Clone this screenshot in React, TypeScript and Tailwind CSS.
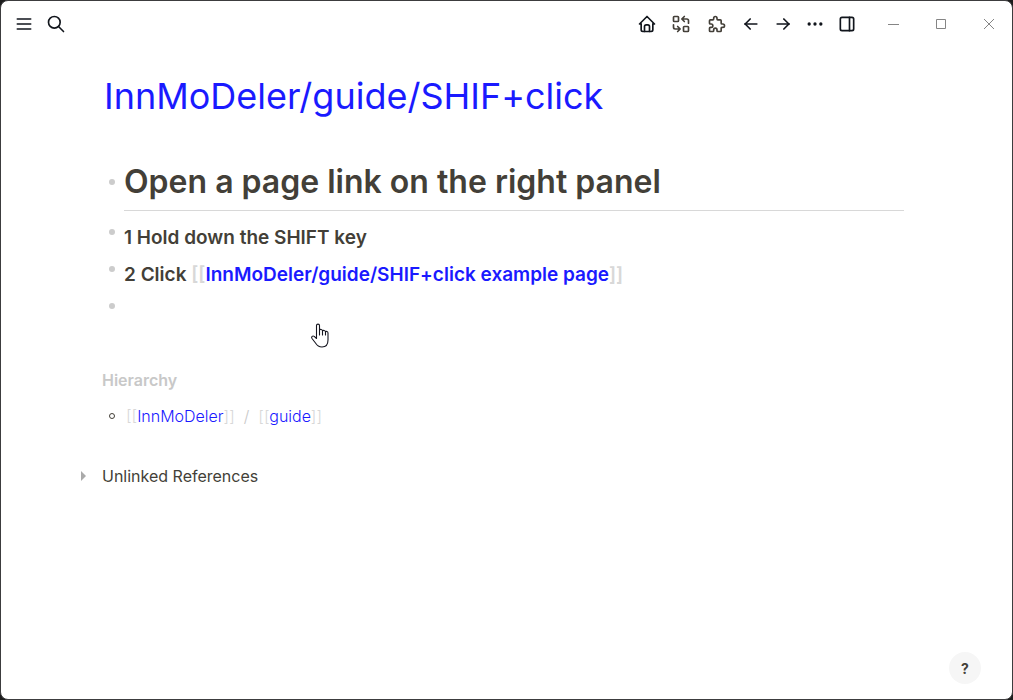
import type { ReactNode } from "react";
import {
  TbArrowLeft,
  TbArrowRight,
  TbDots,
  TbHome,
  TbLayoutSidebarRight,
  TbMenu2,
  TbPuzzle,
  TbReplace,
  TbSearch,
} from "react-icons/tb";

function IconButton({ label, children }: { label: string; children: ReactNode }) {
  return (
    <button
      type="button"
      aria-label={label}
      className="flex h-8 w-8 items-center justify-center rounded hover:bg-gray-100"
    >
      {children}
    </button>
  );
}

function WindowButton({ label, path }: { label: string; path: string }) {
  return (
    <button
      type="button"
      aria-label={label}
      className="flex h-8 w-12 items-center justify-center text-[#858585] hover:bg-gray-100"
    >
      <svg width="12" height="12" viewBox="0 0 12 12" fill="none" stroke="currentColor">
        <path d={path} />
      </svg>
    </button>
  );
}

function PageLink({ name }: { name: string }) {
  return (
    <span className="text-[#d8d8d8]">
      [[
      <a href="#" className="text-[#1a1aff]">
        {name}
      </a>
      ]]
    </span>
  );
}

function Bullet() {
  return <span className="h-[6px] w-[6px] shrink-0 rounded-full bg-[#cccccc]" />;
}

function HandCursor() {
  return (
    <svg
      className="pointer-events-none absolute top-[322px] left-[309px]"
      width="20"
      height="26"
      viewBox="0 0 20 26"
      fill="white"
      stroke="#15151f"
      strokeWidth="1.1"
      strokeLinejoin="round"
      strokeLinecap="round"
      aria-hidden="true"
    >
      <path d="M6.5 15.5V2.5C6.5 0.6 9.5 0.6 9.5 2.5V7C10 6 12.5 6.2 12.5 8C13 7 15.5 7.2 15.5 9C16 8 18 8.4 18 10V17C18 21.500 15.500 24 12 24C8.500 24 7 22.500 5.500 20L2 15.500C0.800 13.800 2.800 12.300 4.200 13.400Z" />
      <path d="M9.500 7V12M12.500 8V12M15.500 9V12" />
    </svg>
  );
}

export default function App() {
  return (
    <div className="min-h-screen bg-[#1c1c1c] font-['Inter',sans-serif]">
      <div className="relative flex min-h-screen flex-col rounded-lg border border-[#3c3c3e] bg-white text-[#433f38]">
        <header className="-mr-px flex h-[46px] items-center justify-between pl-[7px] text-[#11151c]">
          <div className="flex">
            <IconButton label="Toggle left sidebar">
              <TbMenu2 size={20} />
            </IconButton>
            <IconButton label="Search">
              <TbSearch size={20} />
            </IconButton>
          </div>
          <div className="flex items-center">
            <div className="flex items-center gap-[2px]">
              <IconButton label="Home">
                <TbHome size={20} />
              </IconButton>
              <div className="flex items-center gap-1 text-[#433f38]">
                <IconButton label="Replace">
                  <TbReplace size={20} />
                </IconButton>
                <IconButton label="Plugins">
                  <TbPuzzle size={20} />
                </IconButton>
              </div>
              <div className="flex items-center">
                <IconButton label="Go back">
                  <TbArrowLeft size={20} />
                </IconButton>
                <IconButton label="Go forward">
                  <TbArrowRight size={20} />
                </IconButton>
                <IconButton label="More">
                  <TbDots size={20} />
                </IconButton>
                <IconButton label="Toggle right sidebar">
                  <TbLayoutSidebarRight size={20} />
                </IconButton>
              </div>
            </div>
            <div className="ml-[6px] flex">
              <WindowButton label="Minimize" path="M1 6.500H12" />
              <WindowButton label="Maximize" path="M1.500 1.500H10.500V10.500H1.500Z" />
              <WindowButton label="Close" path="M1 1L11 11M11 1L1 11" />
            </div>
          </div>
        </header>

        <main className="pr-[108px] pl-[101px]">
          <h1 className="pt-[26px] pl-0.5 text-[36px] leading-[46px] text-[#1a1aff]">
            <a href="#">InnMoDeler/guide/SHIF+click</a>
          </h1>

          <ul className="mt-[40px] pl-[7px]">
            <li className="flex gap-[9px]">
              <div className="flex h-[46px] items-center">
                <Bullet />
              </div>
              <h2 className="grow border-b border-[#d8d8d8] pb-[5px] text-[32px] leading-[46px] font-semibold">
                Open a page link on the right panel
              </h2>
            </li>
            <li className="mt-[18px] flex gap-[9px]">
              <Bullet />
              <h3 className="-mt-[3px] -mb-[2px] text-[19px] leading-[24px] font-semibold">
                1 Hold down the SHIFT key
              </h3>
            </li>
            <li className="mt-[18px] flex gap-[9px]">
              <Bullet />
              <h3 className="-mt-[3px] -mb-[2px] text-[19px] leading-[24px] font-semibold">
                2 Click <PageLink name="InnMoDeler/guide/SHIF+click example page" />
              </h3>
            </li>
            <li className="mt-[18px] flex h-6 gap-[9px]">
              <Bullet />
            </li>
          </ul>

          <section className="mt-[41px]">
            <h2 className="text-[16px] leading-[24px] font-semibold text-[#c8c8c8]">Hierarchy</h2>
            <div className="mt-3 flex items-center gap-[11px] pl-[7px]">
              <span className="h-[6px] w-[6px] rounded-full border border-[#433f38]" />
              <p className="flex gap-[9px] text-[16px] leading-[24px] font-light text-[#c8c8c8]">
                <PageLink name="InnMoDeler" />
                <span>/</span>
                <PageLink name="guide" />
              </p>
            </div>
          </section>

          <section className="mt-9 -ml-[21px]">
            <button type="button" className="flex items-center gap-4 text-[16px] leading-[24px]">
              <svg width="5" height="10" viewBox="0 0 5 10" fill="#aaaaaa" aria-hidden="true">
                <path d="M0 0L5 5L0 10Z" />
              </svg>
              Unlinked References
            </button>
          </section>
        </main>

        <button
          type="button"
          aria-label="Help"
          className="absolute right-[31px] bottom-[15px] h-8 w-8 rounded-full bg-[#f6f6f6] text-[14px] font-bold"
        >
          ?
        </button>
        <HandCursor />
      </div>
    </div>
  );
}
